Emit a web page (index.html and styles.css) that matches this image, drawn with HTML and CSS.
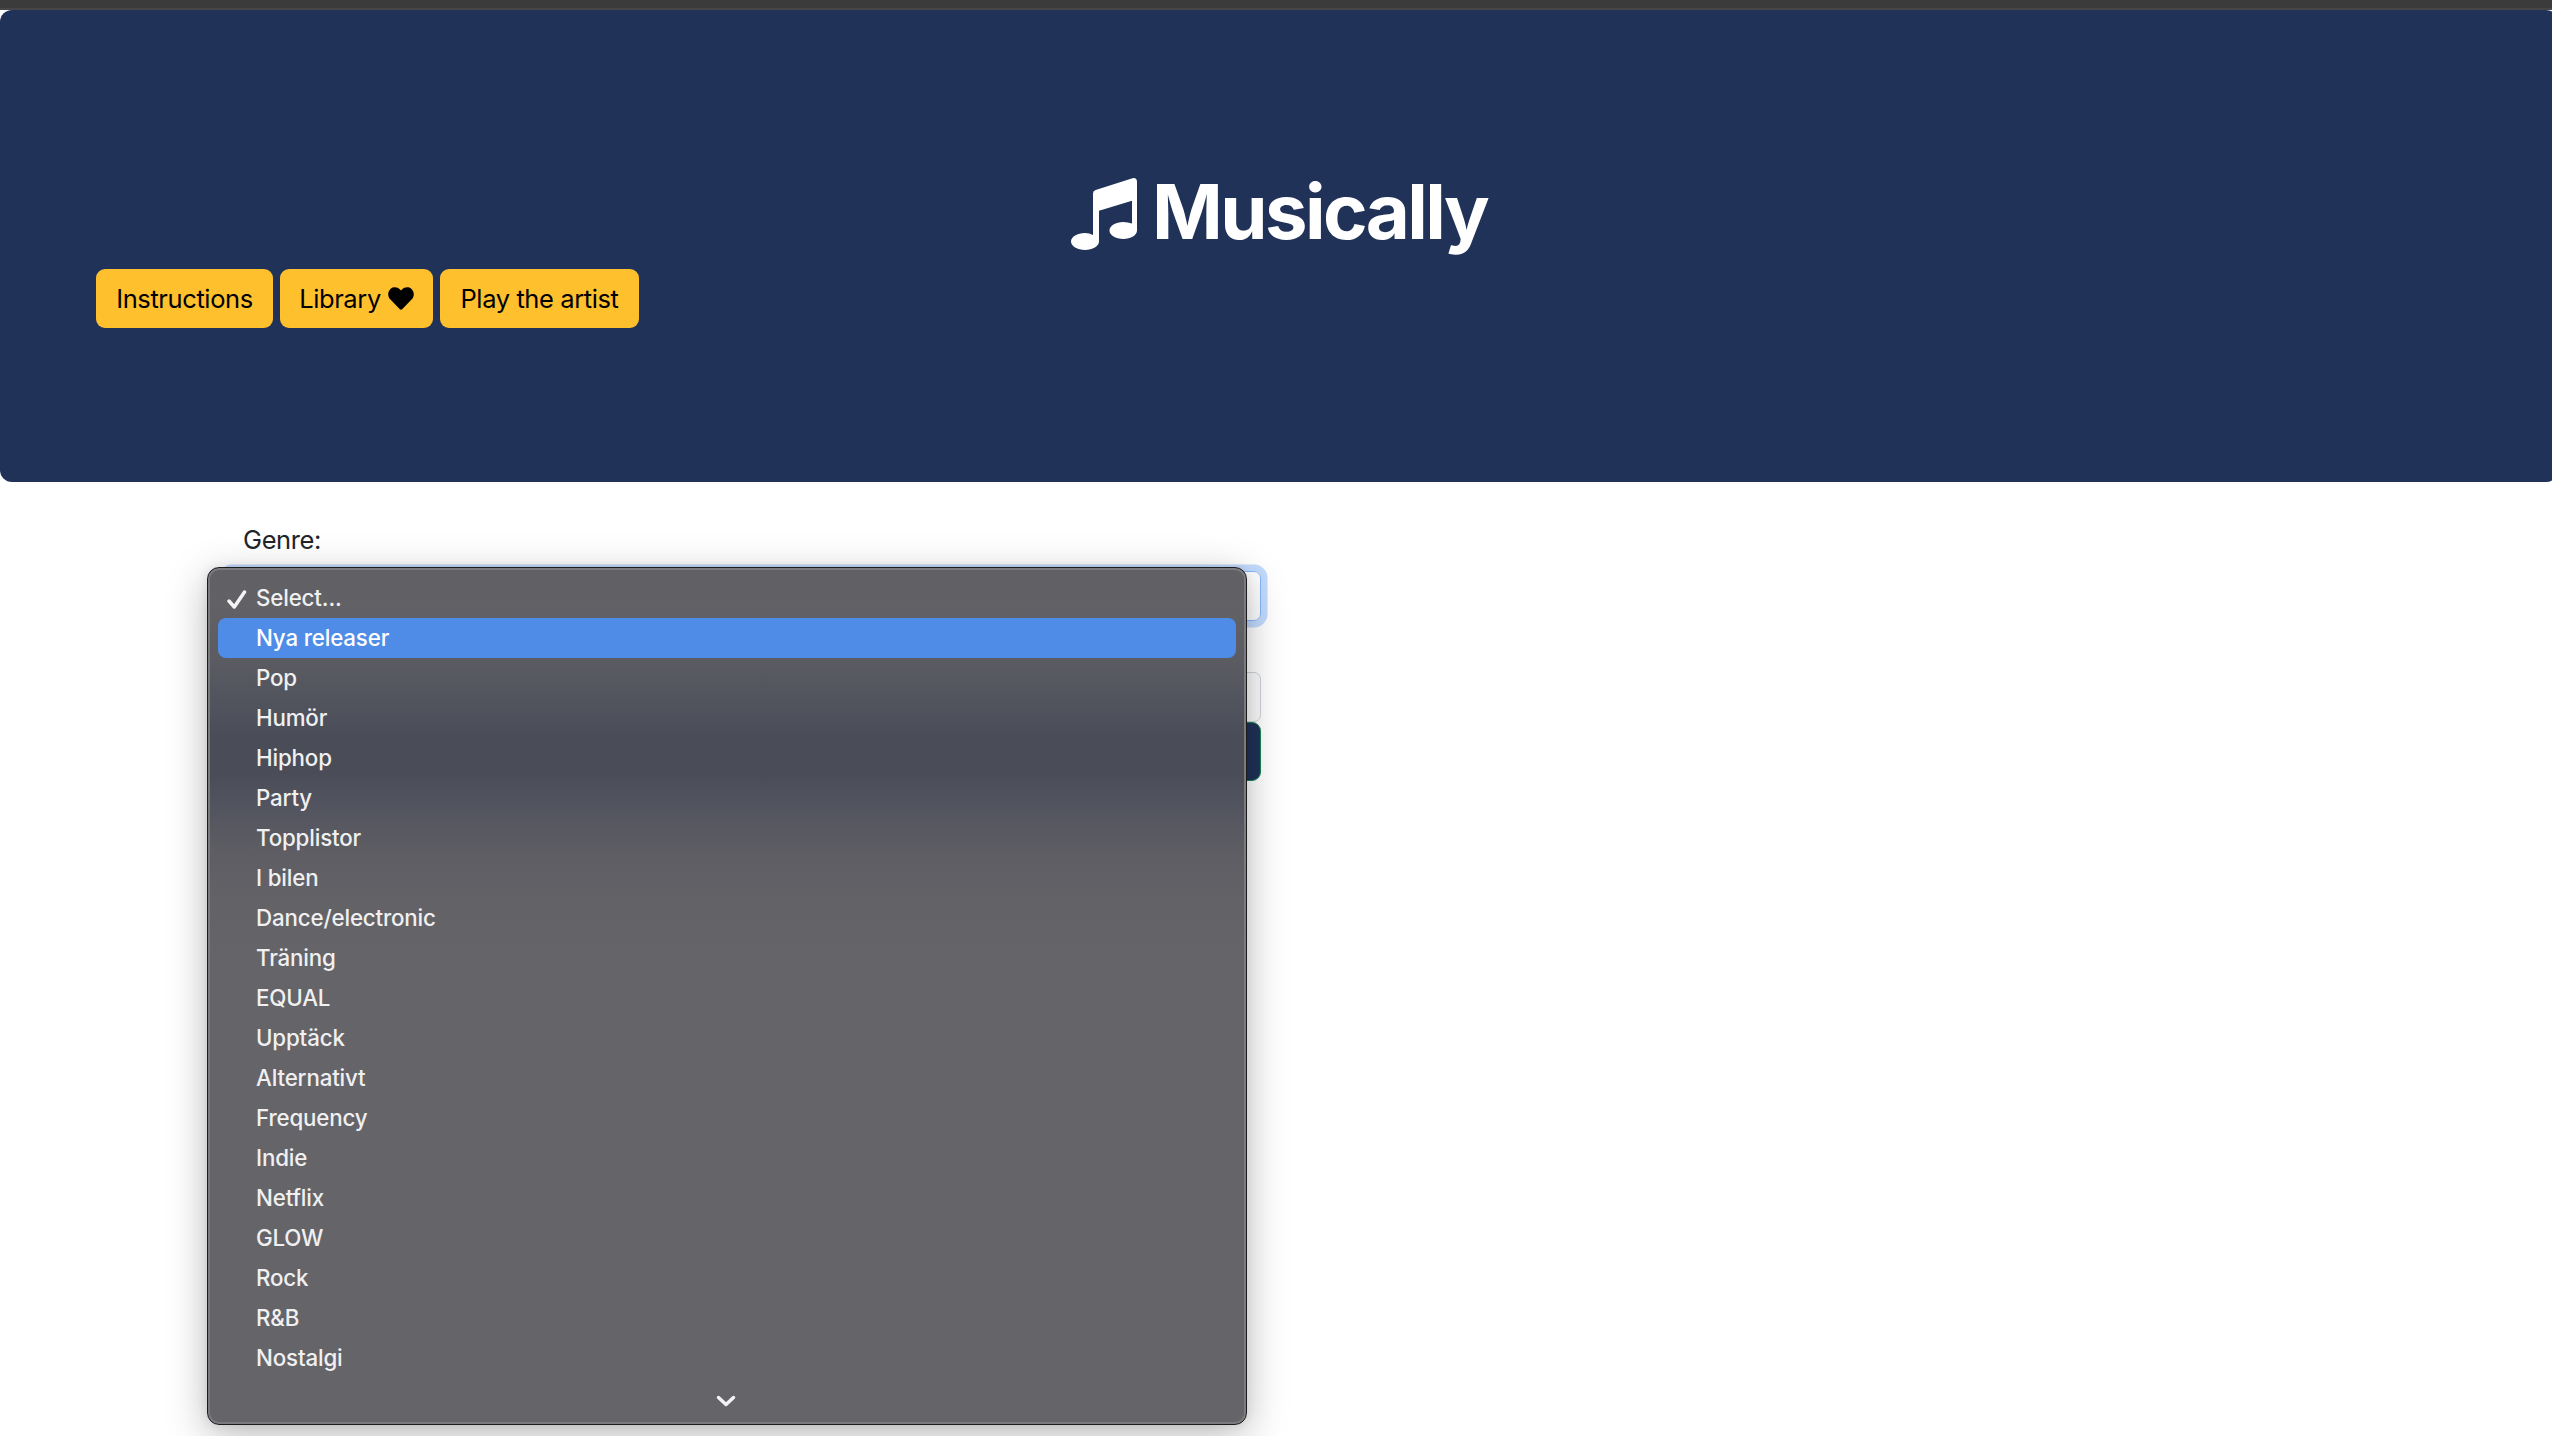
FILE: index.html
```html
<!DOCTYPE html>
<html lang="en">
<head>
<meta charset="utf-8">
<title>Musically</title>
<link rel="stylesheet" href="styles.css">
</head>
<body>
<div class="topbar"></div>
<header class="hero">
  <h1 class="brand">
    <svg class="note" viewBox="0 0 66 72" aria-hidden="true"><path fill-rule="evenodd" d="M22 57V15.500Q22 12.800 24.600 12L61.500 .200Q66 -.500 66 4V52.500C66 57 60 61 52.300 61S38.500 57 38.500 52.500S44.600 44 52.300 44Q57 44 61 45.500V22.700L28 32.800V63.500C28 68 21.500 72 14 72S0 68 0 63.500S6.300 55 14 55Q18.500 55 22 57Z"/></svg>
    <span class="brand-name">Musically</span>
  </h1>
  <nav class="actions">
    <button class="btn instructions">Instructions</button>
    <button class="btn library">Library <svg class="heart" viewBox="0 0 512 460" aria-hidden="true"><path d="M462 37C407-9 326 0 276 51L256 71L236 51C186 0 105-9 50 37C-13 91-16 188 40 246L233 446C246 458 266 458 279 446L472 246C528 188 525 91 462 37Z"/></svg></button>
    <button class="btn artist">Play the artist</button>
  </nav>
</header>
<main class="content">
  <form class="search">
    <label class="label">Genre:</label>
    <div class="field focused"></div>
    <div class="field"></div>
    <div class="submit"></div>
  </form>
</main>
<div class="menu">
  <ul class="options">
    <li class="option"><svg class="check" viewBox="0 0 20 20" aria-hidden="true"><path d="M2 11L7.300 17L17.500 2"/></svg>Select...</li>
    <li class="option active">Nya releaser</li>
    <li class="option">Pop</li>
    <li class="option">Humör</li>
    <li class="option">Hiphop</li>
    <li class="option">Party</li>
    <li class="option">Topplistor</li>
    <li class="option">I bilen</li>
    <li class="option">Dance/electronic</li>
    <li class="option">Träning</li>
    <li class="option">EQUAL</li>
    <li class="option">Upptäck</li>
    <li class="option">Alternativt</li>
    <li class="option">Frequency</li>
    <li class="option">Indie</li>
    <li class="option">Netflix</li>
    <li class="option">GLOW</li>
    <li class="option">Rock</li>
    <li class="option">R&amp;B</li>
    <li class="option">Nostalgi</li>
  </ul>
  <svg class="more" viewBox="0 0 20 12" aria-hidden="true"><path d="M2.500 2.500L10 9.500L17.500 2.500"/></svg>
</div>
</body>
</html>
```
FILE: styles.css
```css
* { box-sizing: border-box; }
html, body { overflow: hidden; }
body {
  margin: 0;
  height: 1436px;
  background: #fff;
  color: #212529;
  font-family: Inter, "Liberation Sans", sans-serif;
  font-size: 25px;
}
.topbar {
  height: 10px;
  background: #3b3b3b;
  border-bottom: 2px solid #464646;
}
.hero {
  height: 472px;
  margin-right: -6px;
  padding: 159px 96px 0;
  background: #203258;
  border-radius: 12px;
}
.brand {
  display: flex;
  align-items: flex-start;
  margin: 0 0 0 975px;
  height: 100px;
  font-size: 76px;
  line-height: 84px;
  font-weight: 700;
  color: #fff;
}
.note { width: 66px; height: 72px; margin: 9px 15px 0 0; fill: #fff; }
.brand-name { letter-spacing: -2.6px; white-space: nowrap; }
.actions { display: flex; gap: 7px; }
.btn {
  display: flex;
  align-items: center;
  justify-content: center;
  gap: 8px;
  height: 59px;
  padding: 0;
  border: 0;
  border-radius: 9px;
  background: #ffc02e;
  color: #000;
  font: inherit;
  font-size: 25.500px;
  letter-spacing: -.4px;
  white-space: nowrap;
}
.instructions { width: 177px; }
.library { width: 153px; gap: 7px; }
.artist { width: 199px; }
.heart { width: 26px; height: 23px; }
.content { padding: 40px 0 0 225px; }
.search { width: 1036px; }
.label {
  display: block;
  height: 49px;
  padding-left: 18px;
  line-height: 36px;
  font-size: 25.500px;
  letter-spacing: -.4px;
}
.field {
  height: 50px;
  margin-bottom: 51px;
  border: 1px solid #ced4da;
  border-radius: 7px;
}
.focused { border-color: #86b7fe; box-shadow: 0 0 0 6.500px #c2dbfe; }
.field + .field { margin-bottom: 0; background: #fcfcfc; }
.submit {
  height: 59px;
  border: 1px solid #198754;
  border-radius: 9px;
  background: #203258;
}
.menu {
  position: absolute;
  left: 207px;
  top: 567px;
  width: 1040px;
  height: 858px;
  padding: 10px;
  border: 1px solid #1c1c1e;
  border-radius: 12px;
  background: linear-gradient(#616165 0, #616166 40px, #5b5c62 92px, #52545e 130px, #4a4c58 172px, #4a4c58 205px, #51535e 235px, #5d5d63 282px, #636267 330px, #656469 400px);
  box-shadow: inset 0 0 0 2px #7b7b7e, 0 10px 40px rgba(0, 0, 0, .28), 0 0 10px rgba(0, 0, 0, .08);
}
.options { margin: 0; padding: 0; list-style: none; }
.option {
  position: relative;
  height: 40px;
  padding-left: 38px;
  border-radius: 8px;
  line-height: 40px;
  font-size: 22.300px;
  font-weight: 450;
  letter-spacing: -.15px;
  color: #f0f0f1;
  white-space: nowrap;
}
.active { background: #4f8ce8; color: #fff; }
.check { position: absolute; left: 9px; top: 12px; width: 20px; height: 20px; }
.check path, .more path { fill: none; stroke: #f3f3f4; stroke-width: 3.500; stroke-linecap: round; stroke-linejoin: round; }
.more { display: block; width: 20px; height: 12px; margin: 17px 0 0 498px; }
```
